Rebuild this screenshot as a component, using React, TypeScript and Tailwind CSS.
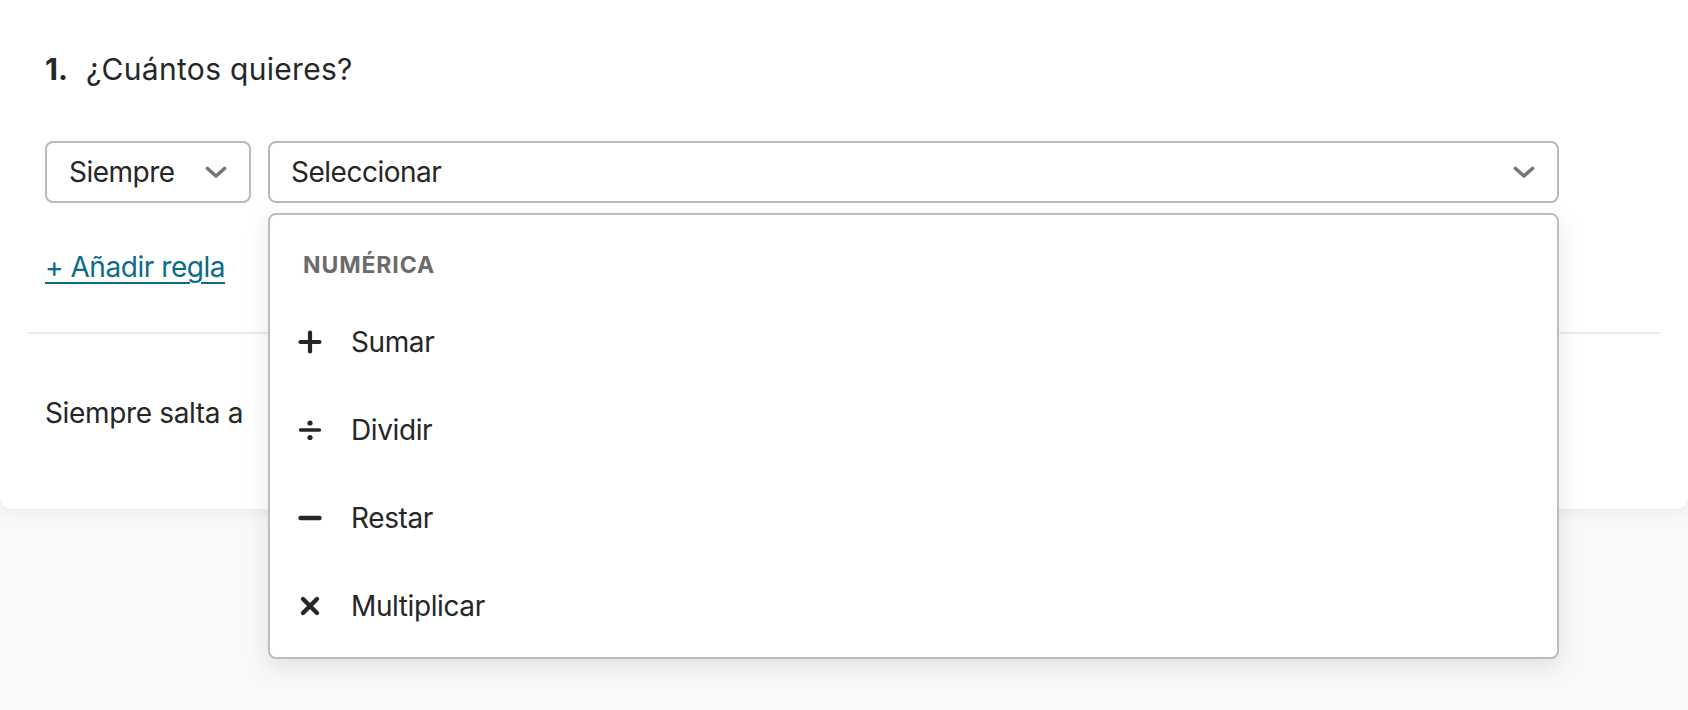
import React from "react";

const Chevron = () => (
  <svg width="22" height="12" viewBox="0 0 22 12" fill="none">
    <path d="M2.5 2.5 L11 10 L19.5 2.5" stroke="#767676" strokeWidth="3.6" strokeLinecap="round" strokeLinejoin="round" />
  </svg>
);

const PlusIcon = () => (
  <svg width="24" height="24" viewBox="0 0 24 24" fill="none">
    <path d="M12 2.5 V21.5 M2.5 12 H21.5" stroke="#262626" strokeWidth="4.2" strokeLinecap="round" />
  </svg>
);

const DivideIcon = () => (
  <svg width="24" height="24" viewBox="0 0 24 24" fill="none">
    <path d="M2.5 12 H21.5" stroke="#262626" strokeWidth="3.4" strokeLinecap="round" />
    <circle cx="12" cy="5" r="2.6" fill="#262626" />
    <circle cx="12" cy="19.5" r="2.6" fill="#262626" />
  </svg>
);

const MinusIcon = () => (
  <svg width="24" height="24" viewBox="0 0 24 24" fill="none">
    <path d="M2.5 12 H21.5" stroke="#262626" strokeWidth="4.4" strokeLinecap="round" />
  </svg>
);

const TimesIcon = () => (
  <svg width="24" height="24" viewBox="0 0 24 24" fill="none">
    <path d="M5 5 L19 19 M19 5 L5 19" stroke="#262626" strokeWidth="4.4" strokeLinecap="round" />
  </svg>
);

const items = [
  { label: "Sumar", icon: <PlusIcon /> },
  { label: "Dividir", icon: <DivideIcon /> },
  { label: "Restar", icon: <MinusIcon /> },
  { label: "Multiplicar", icon: <TimesIcon /> },
];

export default function App() {
  return (
    <div
      className="min-h-screen bg-[#f9f9f9] text-[#262626]"
      style={{ fontFamily: "Inter, 'Noto Sans', sans-serif" }}
    >
      <div className="bg-white rounded-b-[12px] shadow-[0_4px_14px_rgba(0,0,0,0.06)] pt-[49px] pb-[78px]">
        <div className="px-[45px]">
          <div className="flex items-baseline text-[30px] leading-[40px]">
            <span className="font-bold">1.</span>
            <span className="ml-[18px] tracking-[0.3px]">¿Cuántos quieres?</span>
          </div>

          <div className="mt-[52px] flex gap-[17px]">
            <div className="w-[206px] h-[62px] border-2 border-[#b9b9b9] rounded-[8px] flex items-center justify-between pl-[22px] pr-[22px] text-[28px] tracking-[-0.5px]">
              <span>Siempre</span>
              <Chevron />
            </div>
            <div className="relative w-[1291px]">
              <div className="h-[62px] border-2 border-[#b9b9b9] rounded-[8px] flex items-center justify-between pl-[21px] pr-[22px] text-[28px] tracking-[-0.5px]">
                <span>Seleccionar</span>
                <Chevron />
              </div>
              <div className="absolute left-0 right-0 top-full mt-[10px] h-[446px] bg-white border-2 border-[#bdbdbd] rounded-[8px] shadow-[0_8px_24px_rgba(0,0,0,0.10)] z-10 pt-[36px]">
                <div className="pl-[33px] text-[23px] leading-[28px] font-bold tracking-[0.9px] text-[#6b6b6b]">
                  NUMÉRICA
                </div>
                <div className="mt-[19px]">
                  {items.map((it) => (
                    <div key={it.label} className="h-[88px] flex items-center pl-[28px] text-[28px] tracking-[-0.4px]">
                      <span className="w-[24px] h-[24px] flex items-center justify-center">{it.icon}</span>
                      <span className="ml-[29px]">{it.label}</span>
                    </div>
                  ))}
                </div>
              </div>
            </div>
          </div>

          <div className="mt-[46px] text-[28px] leading-[36px] tracking-[-0.45px]">
            <a href="#" className="text-[#0c6b8b] underline underline-offset-[5px] decoration-2">
              + Añadir regla
            </a>
          </div>
        </div>

        <div className="mx-[28px] mt-[47px] h-[2px] bg-[#ececec]" />

        <div className="px-[45px] mt-[61px] text-[28px] leading-[36px] tracking-[-0.35px]">Siempre salta a</div>
      </div>
    </div>
  );
}
